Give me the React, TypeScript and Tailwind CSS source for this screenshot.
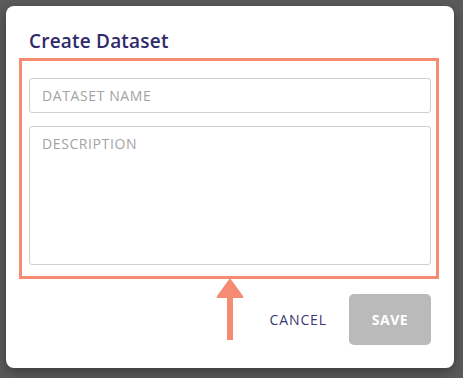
export default function App() {
  return (
    <div
      className="w-[463px] h-[378px] bg-[#5a5a5a] p-[6px] overflow-hidden"
      style={{ fontFamily: '"Open Sans", "Liberation Sans", sans-serif' }}
    >
      <div className="relative w-[448px] h-[362px] bg-white rounded-[8px] shadow-[0_4px_12px_rgba(0,0,0,0.35)] pt-[22px]">
        {/* Title */}
        <h2 className="pl-[23px] text-[19px] leading-[26px] font-semibold text-[#2f2a6b] tracking-[0.2px]">
          Create Dataset
        </h2>

        {/* Highlighted form area */}
        <div className="ml-[13px] mt-[4px] w-[420px] border-[3px] border-[#f68b74] pt-[17px] pl-[7px] pr-[5px] pb-[11px] flex flex-col gap-[13px]">
          <input
            placeholder="DATASET NAME"
            className="h-[35px] w-full rounded-[3px] border border-[#cfcfcf] px-[12px] text-[14px] tracking-[0.6px] text-[#555] placeholder:text-[#a3a3a3] outline-none"
          />
          <textarea
            placeholder="DESCRIPTION"
            className="h-[139px] w-full resize-none rounded-[3px] border border-[#cfcfcf] px-[12px] py-[6px] text-[14px] tracking-[0.6px] text-[#555] placeholder:text-[#a3a3a3] outline-none"
          />
        </div>

        {/* Footer buttons */}
        <div className="flex justify-end items-center gap-[22px] pr-[23px] mt-[15px]">
          <button className="text-[14px] font-medium text-[#3b3676] tracking-[0.9px]">CANCEL</button>
          <button className="w-[82px] h-[51px] rounded-[5px] bg-[#bababa] text-white text-[14px] font-bold tracking-[0.5px]">
            SAVE
          </button>
        </div>

        {/* Annotation arrow */}
        <svg
          className="absolute left-[209px] top-[272px]"
          width="30"
          height="63"
          viewBox="0 0 30 63"
          fill="#f68b74"
        >
          <path d="M15 0 L28 18 Q29 20 27 20 L18 20 L18 62 L12 62 L12 20 L3 20 Q1 20 2 18 Z" />
        </svg>
      </div>
    </div>
  );
}
